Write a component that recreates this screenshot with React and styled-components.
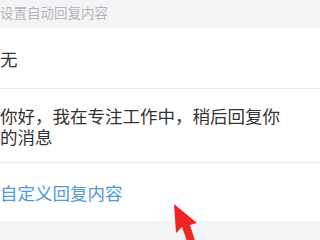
import React from "react";
import styled, { createGlobalStyle } from "styled-components";

const Global = createGlobalStyle`
  html, body { margin: 0; padding: 0; background: #f4f4f6; }
  body { font-family: "Noto Sans CJK SC", "Noto Sans", sans-serif; }
  #root { width: 320px; height: 240px; overflow: hidden; }
`;

const Page = styled.div`
  position: relative;
  width: 320px;
  height: 240px;
  background: #f4f4f6;
  display: flex;
  flex-direction: column;
  overflow: hidden;
`;

const SectionTitle = styled.div`
  height: 28px;
  box-sizing: border-box;
  padding: 3px 0 0 0;
  font-size: 13.5px;
  line-height: 19px;
  color: #b4b4ba;
  white-space: nowrap;
`;

const List = styled.div`
  background: #fff;
  display: flex;
  flex-direction: column;
`;

const Row = styled.div`
  box-sizing: border-box;
  height: ${(p) => p.$h}px;
  padding: ${(p) => p.$pt}px 28px 0 0;
  font-size: 17.5px;
  line-height: 21px;
  color: ${(p) => (p.$link ? "#4f9ad6" : "#333")};
  border-bottom: ${(p) => (p.$last ? "none" : "1px solid #ebebed")};
`;

const Cursor = styled.svg`
  position: absolute;
  left: 170px;
  top: 200px;
`;

export default function App() {
  return (
    <Page>
      <Global />
      <SectionTitle>设置自动回复内容</SectionTitle>
      <List>
        <Row $h={61} $pt={20}>无</Row>
        <Row $h={74} $pt={16}>你好，我在专注工作中，稍后回复你的消息</Row>
        <Row $h={58} $pt={19} $link $last>自定义回复内容</Row>
      </List>
      <Cursor width="34" height="44" viewBox="170 200 34 44">
        <polygon
          points="174,204 176,233 182,227 187,241 195,241 190,225 197,223"
          fill="#ee2424"
        />
      </Cursor>
    </Page>
  );
}
